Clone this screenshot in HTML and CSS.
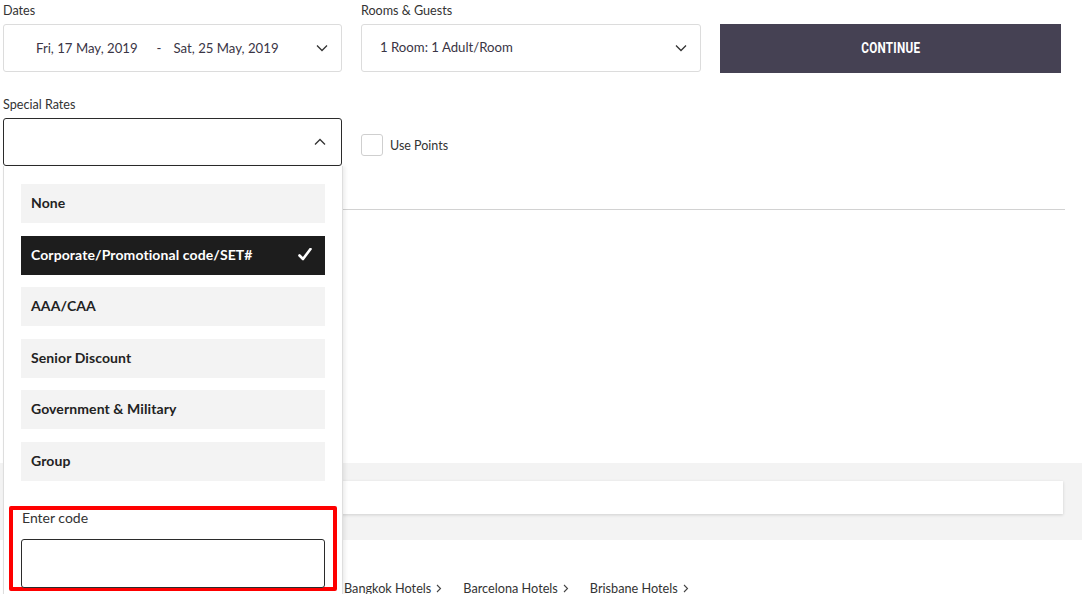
FILE: index.html
```html
<!DOCTYPE html>
<html lang="en">
<head>
<meta charset="utf-8">
<title>Booking</title>
<link rel="stylesheet" href="styles.css">
</head>
<body>
<div class="page">
  <form class="booking">
    <div class="row row-top">
      <div class="field">
        <div class="label">Dates</div>
        <div class="box box-dates">
          <span class="date">Fri, 17 May, 2019</span>
          <span class="dash">-</span>
          <span class="date">Sat, 25 May, 2019</span>
          <svg class="chev" width="12" height="8" viewBox="0 0 12 8"><path d="M1 1.5 L6 6.5 L11 1.5" fill="none" stroke="#333" stroke-width="1.3"/></svg>
        </div>
      </div>
      <div class="field">
        <div class="label">Rooms &amp; Guests</div>
        <div class="box box-rooms">
          <span class="rooms">1 Room: 1 Adult/Room</span>
          <svg class="chev" width="12" height="8" viewBox="0 0 12 8"><path d="M1 1.5 L6 6.5 L11 1.5" fill="none" stroke="#333" stroke-width="1.3"/></svg>
        </div>
      </div>
      <div class="field field-btn">
        <button type="button" class="btn-continue"><span class="btn-text">CONTINUE</span></button>
      </div>
    </div>

    <div class="row row-second">
      <div class="field special">
        <div class="label">Special Rates</div>
        <div class="box box-special">
          <svg class="chev" width="12" height="8" viewBox="0 0 12 8"><path d="M1 6.5 L6 1.5 L11 6.5" fill="none" stroke="#333" stroke-width="1.3"/></svg>
        </div>
        <div class="dropdown">
          <ul class="options">
            <li class="option">None</li>
            <li class="option selected">Corporate/Promotional code/SET#
              <svg class="check" width="14" height="13" viewBox="0 0 14 13"><path d="M1.5 7.5 L5 11 L12.5 1" fill="none" stroke="#fff" stroke-width="2.6" stroke-linecap="round" stroke-linejoin="round"/></svg>
            </li>
            <li class="option">AAA/CAA</li>
            <li class="option">Senior Discount</li>
            <li class="option">Government &amp; Military</li>
            <li class="option">Group</li>
          </ul>
          <div class="code-section">
            <div class="code-label">Enter code</div>
            <div class="code-input"></div>
          </div>
        </div>
      </div>
      <label class="points">
        <span class="checkbox"></span>
        <span class="points-text">Use Points</span>
      </label>
    </div>
  </form>

  <div class="content">
    <div class="divider"></div>
    <div class="band">
      <div class="band-card"></div>
    </div>
    <nav class="links">
      <a class="link">Bangkok Hotels <svg width="6" height="9" viewBox="0 0 6 9"><path d="M1 1 L4.5 4.5 L1 8" fill="none" stroke="#444" stroke-width="1.1"/></svg></a>
      <a class="link">Barcelona Hotels <svg width="6" height="9" viewBox="0 0 6 9"><path d="M1 1 L4.5 4.5 L1 8" fill="none" stroke="#444" stroke-width="1.1"/></svg></a>
      <a class="link">Brisbane Hotels <svg width="6" height="9" viewBox="0 0 6 9"><path d="M1 1 L4.5 4.5 L1 8" fill="none" stroke="#444" stroke-width="1.1"/></svg></a>
    </nav>
  </div>
</div>
</body>
</html>
```

FILE: styles.css
```css
* { box-sizing: border-box; }
html, body {
  margin: 0;
  padding: 0;
  background: #fff;
  overflow: hidden;
  height: 594px;
}
body {
  font-family: "Lato", "Open Sans", sans-serif;
  color: #333;
}
.page {
  position: relative;
  width: 1082px;
  height: 594px;
  overflow: hidden;
}
.booking {
  padding: 3px 0 0 3px;
  position: relative;
  z-index: 2;
}
.row {
  display: flex;
  gap: 19px;
}
.field {
  width: 339px;
  position: relative;
}
.field + .field { width: 340px; }
.label {
  font-size: 12.6px;
  line-height: 16px;
  height: 16px;
  margin-bottom: 5px;
  color: #333;
}
.box {
  height: 48px;
  border: 1px solid #dcdcdc;
  border-radius: 3px;
  display: flex;
  align-items: center;
  position: relative;
  font-size: 13.2px;
  color: #3a3545;
}
.box .chev {
  position: absolute;
  right: 13px;
  top: 19px;
}
.box-dates { padding-left: 32px; }
.dash { margin: 0 12px 0 19px; }
.box-rooms { padding-left: 18px; padding-bottom: 3px; }
.field-btn { padding-top: 21px; }
.btn-continue {
  display: flex;
  align-items: center;
  justify-content: center;
  width: 341px;
  height: 49px;
  border: 0;
  background: #454153;
  color: #fff;
  padding: 0 0 1px 0;
}
.btn-text {
  display: inline-block;
  font-family: "Roboto", "DejaVu Sans", sans-serif;
  font-weight: bold;
  font-size: 15px;
  letter-spacing: 0.3px;
  transform: scaleX(0.78);
}
.row-second { margin-top: 24px; }
.box-special {
  border-color: #2b2b2b;
}
.box-special .chev { top: 19px; right: 15px; }
.dropdown {
  position: absolute;
  left: 0;
  top: 69px;
  width: 340px;
  height: 430px;
  background: #fff;
  border: 1px solid #dedede;
  border-top: 0;
  box-shadow: 2px 0 4px rgba(0,0,0,0.08);
  padding: 18px 17px 0 17px;
}
.options {
  list-style: none;
  margin: 0;
  padding: 0;
  display: flex;
  flex-direction: column;
  gap: 12.6px;
}
.option {
  height: 39px;
  background: #f3f3f3;
  display: flex;
  align-items: center;
  justify-content: space-between;
  padding: 0 13px 2px 10px;
  font-size: 14px;
  font-weight: bold;
  letter-spacing: 0.1px;
  color: #222;
}
.option.selected {
  background: #1d1d1d;
  color: #fff;
}
.code-section {
  margin: 25px -12px 0 -12px;
  border: 4px solid #fe0000;
  border-radius: 2px;
  padding: 0 8px 0 8px;
  height: 85px;
}
.code-label {
  font-size: 14px;
  line-height: 15px;
  color: #333;
  padding-left: 1px;
}
.code-input {
  margin-top: 14px;
  height: 49px;
  border: 1px solid #2b2b2b;
  border-radius: 3px;
  background: #fff;
}
.points {
  display: flex;
  align-items: center;
  gap: 7px;
  margin-top: 37px;
  align-self: flex-start;
  font-size: 12.5px;
  color: #333;
}
.checkbox {
  width: 22px;
  height: 22px;
  border: 1px solid #cfcfcf;
  border-radius: 3px;
  background: #fff;
}
.content {
  position: absolute;
  left: 0;
  top: 0;
  width: 1082px;
  height: 594px;
  z-index: 1;
}
.divider {
  position: absolute;
  left: 3px;
  top: 209px;
  width: 1062px;
  height: 1px;
  background: #d2d2d2;
}
.band {
  position: absolute;
  left: 0;
  top: 463px;
  width: 1082px;
  height: 77px;
  background: #f3f3f3;
  padding: 18px 19px 0 19px;
}
.band-card {
  height: 33px;
  background: #fff;
  box-shadow: 0 1px 3px rgba(0,0,0,0.15);
}
.links {
  position: absolute;
  left: 344px;
  top: 582px;
  display: flex;
  gap: 21px;
  font-size: 12.7px;
  line-height: 12px;
}
.link {
  color: #333;
  display: flex;
  align-items: center;
  gap: 5px;
  height: 12px;
}
```
